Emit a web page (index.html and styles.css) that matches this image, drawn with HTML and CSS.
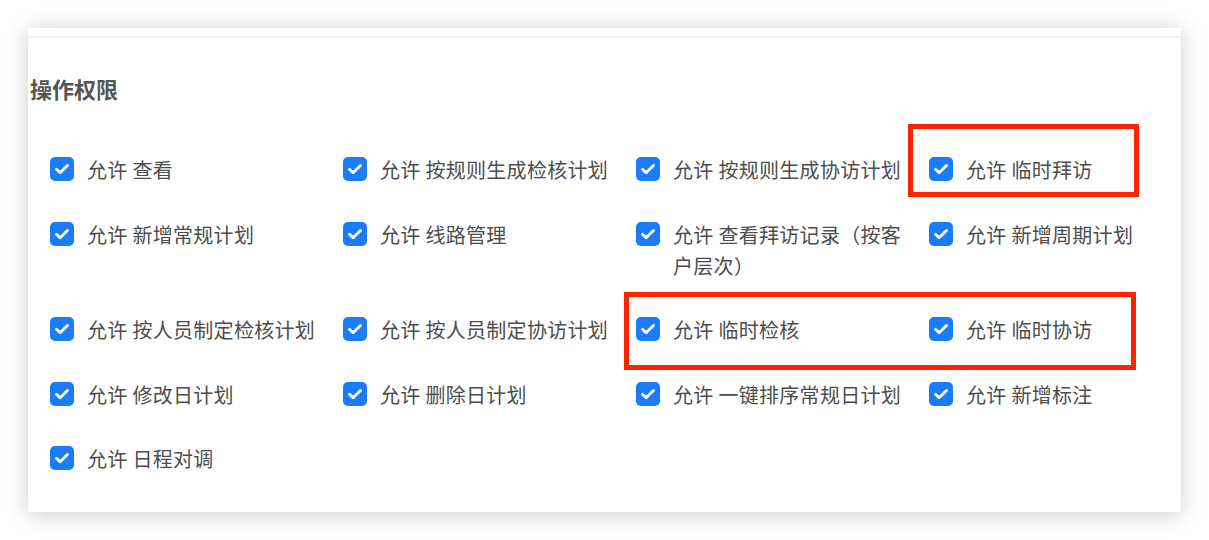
FILE: index.html
```html
<!DOCTYPE html>
<html lang="zh-CN">
<head>
   <meta charset="UTF-8">
   <meta name="viewport" content="width=device-width, initial-scale=1.0">
   <title>操作权限</title>
   <link rel="stylesheet" href="styles.css">
</head>
<body>

<div class="card">
   <div class="card-top"></div>
   <h2 class="title">操作权限</h2>

   <!-- 权限列表 -->
   <div class="perm-grid">
       <label class="perm"><span class="box"><svg viewBox="0 0 24 24"><path d="M6.5 12.2l3.6 3.6 7.4-7.4"/></svg></span><span class="text">允许 查看</span></label>
       <label class="perm"><span class="box"><svg viewBox="0 0 24 24"><path d="M6.5 12.2l3.6 3.6 7.4-7.4"/></svg></span><span class="text">允许 按规则生成检核计划</span></label>
       <label class="perm"><span class="box"><svg viewBox="0 0 24 24"><path d="M6.5 12.2l3.6 3.6 7.4-7.4"/></svg></span><span class="text">允许 按规则生成协访计划</span></label>
       <label class="perm"><span class="box"><svg viewBox="0 0 24 24"><path d="M6.5 12.2l3.6 3.6 7.4-7.4"/></svg></span><span class="text">允许 临时拜访</span></label>

       <label class="perm"><span class="box"><svg viewBox="0 0 24 24"><path d="M6.5 12.2l3.6 3.6 7.4-7.4"/></svg></span><span class="text">允许 新增常规计划</span></label>
       <label class="perm"><span class="box"><svg viewBox="0 0 24 24"><path d="M6.5 12.2l3.6 3.6 7.4-7.4"/></svg></span><span class="text">允许 线路管理</span></label>
       <label class="perm"><span class="box"><svg viewBox="0 0 24 24"><path d="M6.5 12.2l3.6 3.6 7.4-7.4"/></svg></span><span class="text">允许 查看拜访记录（按客户层次）</span></label>
       <label class="perm"><span class="box"><svg viewBox="0 0 24 24"><path d="M6.5 12.2l3.6 3.6 7.4-7.4"/></svg></span><span class="text">允许 新增周期计划</span></label>

       <label class="perm"><span class="box"><svg viewBox="0 0 24 24"><path d="M6.5 12.2l3.6 3.6 7.4-7.4"/></svg></span><span class="text">允许 按人员制定检核计划</span></label>
       <label class="perm"><span class="box"><svg viewBox="0 0 24 24"><path d="M6.5 12.2l3.6 3.6 7.4-7.4"/></svg></span><span class="text">允许 按人员制定协访计划</span></label>
       <label class="perm"><span class="box"><svg viewBox="0 0 24 24"><path d="M6.5 12.2l3.6 3.6 7.4-7.4"/></svg></span><span class="text">允许 临时检核</span></label>
       <label class="perm"><span class="box"><svg viewBox="0 0 24 24"><path d="M6.5 12.2l3.6 3.6 7.4-7.4"/></svg></span><span class="text">允许 临时协访</span></label>

       <label class="perm"><span class="box"><svg viewBox="0 0 24 24"><path d="M6.5 12.2l3.6 3.6 7.4-7.4"/></svg></span><span class="text">允许 修改日计划</span></label>
       <label class="perm"><span class="box"><svg viewBox="0 0 24 24"><path d="M6.5 12.2l3.6 3.6 7.4-7.4"/></svg></span><span class="text">允许 删除日计划</span></label>
       <label class="perm"><span class="box"><svg viewBox="0 0 24 24"><path d="M6.5 12.2l3.6 3.6 7.4-7.4"/></svg></span><span class="text">允许 一键排序常规日计划</span></label>
       <label class="perm"><span class="box"><svg viewBox="0 0 24 24"><path d="M6.5 12.2l3.6 3.6 7.4-7.4"/></svg></span><span class="text">允许 新增标注</span></label>

       <label class="perm"><span class="box"><svg viewBox="0 0 24 24"><path d="M6.5 12.2l3.6 3.6 7.4-7.4"/></svg></span><span class="text">允许 日程对调</span></label>
   </div>

   <!-- 标注框 -->
   <div class="mark mark-visit"></div>
   <div class="mark mark-temp"></div>
</div>

</body>
</html>
```

FILE: styles.css
```css
body {
    font-family: "Noto Sans CJK SC", "Noto Sans", sans-serif;
    margin: 0;
    padding: 28px;
    background-color: #fff;
    color: #555;
}
.card {
    position: relative;
    width: 1153px;
    height: 484px;
    background-color: #fff;
    box-shadow: 0 2px 22px rgba(0, 0, 0, 0.2);
}
.card-top {
    height: 8px;
    border-bottom: 2px solid #f0f0f0;
}
.title {
    margin: 35px 0 0 2px;
    font-size: 22px;
    line-height: 30px;
    font-weight: bold;
    color: #555;
}
.perm-grid {
    display: grid;
    grid-template-columns: repeat(4, 293px);
    row-gap: 33.5px;
    margin-top: 51px;
    padding-left: 22px;
}
.perm {
    display: flex;
    align-items: flex-start;
    gap: 13px;
    font-size: 20px;
    line-height: 31px;
    letter-spacing: 0.3px;
    color: #4d4d4d;
}
.box {
    flex: none;
    width: 24px;
    height: 24px;
    margin-top: 3px;
    border-radius: 5px;
    background-color: #1a7cf6;
}
.box svg {
    display: block;
    width: 24px;
    height: 24px;
    fill: none;
    stroke: #fff;
    stroke-width: 2.8;
    stroke-linecap: round;
    stroke-linejoin: round;
}
.text {
    max-width: 240px;
}
.mark {
    position: absolute;
    box-sizing: border-box;
    border: 5px solid #ff2400;
}
.mark-visit {
    left: 880px;
    top: 96px;
    width: 231px;
    height: 73px;
}
.mark-temp {
    left: 596px;
    top: 264px;
    width: 512px;
    height: 78px;
}
```
